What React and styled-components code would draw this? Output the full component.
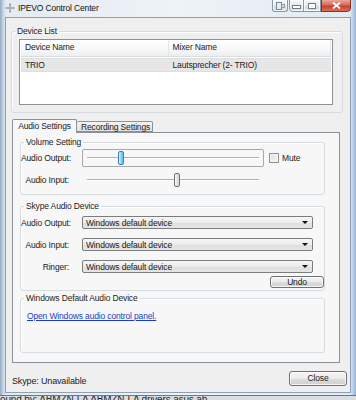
import React from 'react';
import styled, { createGlobalStyle, css } from 'styled-components';

const GlobalStyle = createGlobalStyle`
  html, body {
    margin: 0;
    padding: 0;
    background: #ffffff;
  }
  body {
    font-family: "Liberation Sans", Arial, sans-serif;
    font-size: 8.5px;
    letter-spacing: -0.15px;
    color: #1b1b1b;
  }
`;

const volume = [
  { label: 'Audio Output:', value: 19, focused: true, mute: true },
  { label: 'Audio Input:', value: 50, focused: false, mute: false },
];

const skypeDevices = ['Audio Output:', 'Audio Input:', 'Ringer:'];

const App = () => {
  return (
    <>
      <GlobalStyle />
      <Screen>
        <Window>
          <TitleBar>
            <AppIcon viewBox='0 0 10 10'>
              <path d='M5 0.5v9M0.5 5h9' stroke='#8c959e' strokeWidth='1.6' />
              <path d='M5 2v6M2 5h6' stroke='#c9d0d6' strokeWidth='0.6' />
            </AppIcon>
            <Title>IPEVO Control Center</Title>
            <CaptionButtons>
              <HelpButton>
                <svg width='9' height='8' viewBox='0 0 9 8'>
                  <rect x='0.5' y='0.5' width='5' height='7' fill='#e8edf2' stroke='#7d8a97' />
                  <path d='M5.5 2.5h3v3h-3z' fill='#d3dbe3' stroke='#7d8a97' strokeWidth='0.8' />
                </svg>
              </HelpButton>
              <ButtonGroup>
                <CapButton width={15}>
                  <MinGlyph />
                </CapButton>
                <CapButton width={17}>
                  <MaxGlyph />
                </CapButton>
                <CloseCap>
                  <svg width='9' height='7' viewBox='0 0 9 7'>
                    <path d='M1 0.5l7 6M8 0.5l-7 6' stroke='#ffffff' strokeWidth='1.8' />
                  </svg>
                </CloseCap>
              </ButtonGroup>
            </CaptionButtons>
          </TitleBar>

          <Client>
            <GroupBox mt={7} ml={5} width={332} pb={7}>
              <Legend>Device List</Legend>
              <ListView>
                <ListHeader>
                  <HeaderCell width={148}>Device Name</HeaderCell>
                  <HeaderCell width={163}>Mixer Name</HeaderCell>
                </ListHeader>
                <ListRow>
                  <Cell width={148}>TRIO</Cell>
                  <Cell width={163}>Lautsprecher (2- TRIO)</Cell>
                </ListRow>
              </ListView>
            </GroupBox>

            <TabStrip>
              <Tab selected>Audio Settings</Tab>
              <Tab>Recording Settings</Tab>
            </TabStrip>

            <TabPanel>
              <GroupBox mt={3} ml={7} width={305} pb={6}>
                <Legend>Volume Setting</Legend>
                {volume.map((v, i) => (
                  <FormRow key={v.label} mt={i === 0 ? 1 : 5}>
                    <FieldLabel>{v.label}</FieldLabel>
                    <Slider focused={v.focused}>
                      <Track />
                      <Thumb active={v.focused} style={{ left: `${v.value}%` }} />
                    </Slider>
                    {v.mute && (
                      <CheckWrap>
                        <CheckBox />
                        <span>Mute</span>
                      </CheckWrap>
                    )}
                  </FormRow>
                ))}
              </GroupBox>

              <GroupBox mt={5} ml={7} width={305} pb={2}>
                <Legend>Skype Audio Device</Legend>
                <ComboList>
                  {skypeDevices.map(label => (
                    <FormRow key={label}>
                      <FieldLabel>{label}</FieldLabel>
                      <Combo>
                        <span>Windows default device</span>
                        <ComboArrow />
                      </Combo>
                    </FormRow>
                  ))}
                </ComboList>
                <UndoRow>
                  <PushButton width={54} height={12}>
                    Undo
                  </PushButton>
                </UndoRow>
              </GroupBox>

              <GroupBox mt={1} ml={7} width={305} height={61}>
                <Legend>Windows Default Audio Device</Legend>
                <Link href='#'>Open Windows audio control panel.</Link>
              </GroupBox>
            </TabPanel>

            <Footer>
              <Status>Skype: Unavailable</Status>
              <PushButton width={58} height={15}>
                Close
              </PushButton>
            </Footer>
          </Client>
        </Window>
        <Desktop>ound by: ABMZN-LA ABMZN-LA drivers asus ab...</Desktop>
      </Screen>
    </>
  );
};

const Screen = styled.div`
  width: 356px;
  height: 400px;
  overflow: hidden;
  display: flex;
  flex-direction: column;
  background: #f4f6f8;
`;

const Window = styled.div`
  height: 396px;
  flex-shrink: 0;
  box-sizing: border-box;
  padding: 0 5px 4px 5px;
  display: flex;
  flex-direction: column;
  background: linear-gradient(
    to right,
    #8fa9c4 0px,
    #c5d4e3 3px,
    #e4ebf2 6px,
    #eef3f7 50%,
    #e2eaf2 calc(100% - 6px),
    #b8d0e8 calc(100% - 3px),
    #8eb3d8 100%
  );
  border-bottom: 1px solid #5d7a97;
`;

const TitleBar = styled.div`
  height: 17px;
  display: flex;
  align-items: flex-start;
  flex-shrink: 0;
`;

const AppIcon = styled.svg`
  width: 10px;
  height: 10px;
  margin: 3px 0 0 0;
`;

const Title = styled.span`
  margin: 3px 0 0 3px;
  font-size: 8.5px;
  line-height: 11px;
  color: #111;
`;

const CaptionButtons = styled.div`
  margin-left: auto;
  display: flex;
  gap: 1px;
`;

const capFace = css`
  box-sizing: border-box;
  height: 12px;
  display: flex;
  align-items: center;
  justify-content: center;
  border: 1px solid #8896a6;
  border-top: none;
  background: linear-gradient(#f4f7fa 0%, #e3e9ef 50%, #d2dbe4 51%, #dde5ec 100%);
  box-shadow: inset 0 0 0 1px rgba(255, 255, 255, 0.7);
`;

const HelpButton = styled.div`
  ${capFace};
  width: 16px;
  border-radius: 0 0 3px 3px;
`;

const ButtonGroup = styled.div`
  display: flex;
  border-radius: 0 0 4px 4px;
  overflow: hidden;
`;

const CapButton = styled.div`
  ${capFace};
  width: ${props => props.width}px;
  &:first-child {
    border-bottom-left-radius: 4px;
  }
  & + & {
    border-left: none;
  }
`;

const MinGlyph = styled.div`
  width: 7px;
  height: 2px;
  margin-top: 3px;
  border: 1px solid #6f7c89;
  background: #fff;
`;

const MaxGlyph = styled.div`
  width: 6px;
  height: 4px;
  border: 1px solid #6f7c89;
  background: #fff;
`;

const CloseCap = styled.div`
  box-sizing: border-box;
  width: 30px;
  height: 12px;
  display: flex;
  align-items: center;
  justify-content: center;
  border: 1px solid #8a2f24;
  border-top: none;
  border-bottom-right-radius: 4px;
  background: linear-gradient(#e7a89a 0%, #d7685a 45%, #c6402f 55%, #d8705d 100%);
`;

const Client = styled.div`
  flex: 1;
  box-sizing: border-box;
  display: flex;
  flex-direction: column;
  background: #efefef;
  border: 1px solid #8ea0b3;
  padding: 0 0 6px 0;
`;

const GroupBox = styled.fieldset`
  box-sizing: border-box;
  margin: ${props => props.mt || 0}px 0 0 ${props => props.ml || 0}px;
  width: ${props => props.width}px;
  ${props => props.height && `height: ${props.height}px;`}
  padding: 0 0 ${props => props.pb || 0}px 0;
  border: 1px solid #d6dbdf;
  border-radius: 3px;
  box-shadow: inset 1px 1px 0 #ffffff;
  min-width: 0;
`;

const Legend = styled.legend`
  margin-left: 3px;
  padding: 0 2px;
  font-size: 8.5px;
  line-height: 12px;
  color: #1b1b1b;
`;

const ListView = styled.div`
  margin: 2px 0 0 7px;
  width: 314px;
  height: 66px;
  box-sizing: border-box;
  border: 1px solid #8d9096;
  background: #ffffff;
  padding: 0 1px;
`;

const ListHeader = styled.div`
  display: flex;
  height: 16px;
  background: linear-gradient(#ffffff 0%, #f6f7f8 60%, #eceef0 100%);
  border-bottom: 1px solid #dadde0;
`;

const HeaderCell = styled.div`
  width: ${props => props.width}px;
  box-sizing: border-box;
  padding-left: 4px;
  line-height: 15px;
  border-right: 1px solid #e3e5e8;
`;

const ListRow = styled.div`
  display: flex;
  height: 12px;
  margin-top: 1px;
  background: #e6e6e6;
  border-top: 1px solid #dedede;
  border-bottom: 1px solid #dedede;
`;

const Cell = styled.div`
  width: ${props => props.width}px;
  box-sizing: border-box;
  padding-left: 4px;
  line-height: 12px;
`;

const TabStrip = styled.div`
  margin: 6px 0 0 6px;
  height: 13px;
  display: flex;
  align-items: flex-end;
`;

const Tab = styled.div`
  box-sizing: border-box;
  padding: 0 4px;
  border: 1px solid #8c9099;
  border-radius: 2px 2px 0 0;
  font-size: 8.5px;
  white-space: nowrap;
  text-align: center;
  ${props =>
    props.selected
      ? css`
          position: relative;
          z-index: 1;
          height: 14px;
          margin-bottom: -1px;
          line-height: 12px;
          width: 65px;
          background: #f7f7f7;
          border-bottom: none;
        `
      : css`
          height: 11px;
          line-height: 10px;
          width: 76px;
          border-left: none;
          background: linear-gradient(#f4f4f4, #e0e0e0);
        `}
`;

const TabPanel = styled.div`
  box-sizing: border-box;
  margin-left: 6px;
  width: 328px;
  height: 231px;
  border: 1px solid #8c9099;
  background: #f7f7f7;
  display: flex;
  flex-direction: column;
`;

const FormRow = styled.div`
  display: flex;
  align-items: center;
  margin-top: ${props => props.mt || 0}px;
`;

const FieldLabel = styled.span`
  width: 48px;
  text-align: right;
  white-space: nowrap;
  margin-right: 13px;
`;

const Slider = styled.div`
  position: relative;
  box-sizing: border-box;
  width: 182px;
  height: ${props => (props.focused ? 18 : 16)}px;
  border: 1px solid ${props => (props.focused ? '#a8a8a8' : 'transparent')};
  border-radius: 2px;
  padding: 0 4px;
  display: flex;
  align-items: center;
`;

const Track = styled.div`
  width: 100%;
  height: 1px;
  background: #b2b2b2;
  border-bottom: 1px solid #ffffff;
`;

const Thumb = styled.div`
  position: absolute;
  top: 50%;
  width: 6px;
  height: 14px;
  margin: -7px 0 0 1px;
  box-sizing: border-box;
  border-radius: 2px;
  ${props =>
    props.active
      ? css`
          border: 1px solid #3c7fb1;
          background: linear-gradient(to right, #e3f4fd, #8fd0f5 50%, #64b9ea);
        `
      : css`
          border: 1px solid #707070;
          background: linear-gradient(to right, #fbfbfb, #e3e3e3 50%, #cfcfcf);
        `}
`;

const CheckWrap = styled.label`
  display: flex;
  align-items: center;
  margin-left: 5px;
  gap: 3px;
`;

const CheckBox = styled.span`
  box-sizing: border-box;
  width: 10px;
  height: 10px;
  border: 1px solid #8f8f8f;
  background: linear-gradient(135deg, #dcdcdc, #f8f8f8);
  box-shadow: inset 0 0 0 1px #f4f4f4;
`;

const ComboList = styled.div`
  margin-top: 4px;
  display: flex;
  flex-direction: column;
  gap: 9px;
`;

const Combo = styled.div`
  box-sizing: border-box;
  width: 231px;
  height: 13px;
  display: flex;
  align-items: center;
  justify-content: space-between;
  padding: 0 4px 0 3px;
  border: 1px solid #7c7c7c;
  border-radius: 2px;
  background: linear-gradient(#f6f6f6 0%, #ececec 50%, #dedede 51%, #e6e6e6 100%);
  font-size: 8.5px;
`;

const ComboArrow = styled.span`
  width: 0;
  height: 0;
  border-left: 3px solid transparent;
  border-right: 3px solid transparent;
  border-top: 3px solid #111;
`;

const UndoRow = styled.div`
  display: flex;
  justify-content: flex-end;
  margin-top: 3px;
`;

const PushButton = styled.div`
  box-sizing: border-box;
  width: ${props => props.width}px;
  height: ${props => props.height}px;
  display: flex;
  align-items: center;
  justify-content: center;
  border: 1px solid #707070;
  border-radius: 3px;
  background: linear-gradient(#f4f4f4 0%, #ebebeb 50%, #dddddd 51%, #d0d0d0 100%);
  box-shadow: inset 0 0 0 1px rgba(255, 255, 255, 0.8);
  font-size: 8.5px;
`;

const Link = styled.a`
  display: block;
  margin: 7px 0 0 6px;
  color: #1a3ec4;
  text-decoration: underline;
  line-height: 11px;
`;

const Footer = styled.div`
  margin: 7px 0 0 6px;
  width: 335px;
  display: flex;
  align-items: center;
  justify-content: space-between;
`;

const Status = styled.span`
  font-size: 9px;
  margin-top: 6px;
`;

const Desktop = styled.div`
  height: 4px;
  flex-shrink: 0;
  overflow: hidden;
  font-family: "Liberation Sans", Arial, sans-serif;
  font-size: 10px;
  line-height: 8px;
  color: #2a2a2a;
  background: #d9dee3;
  white-space: nowrap;
`;

export default App;
